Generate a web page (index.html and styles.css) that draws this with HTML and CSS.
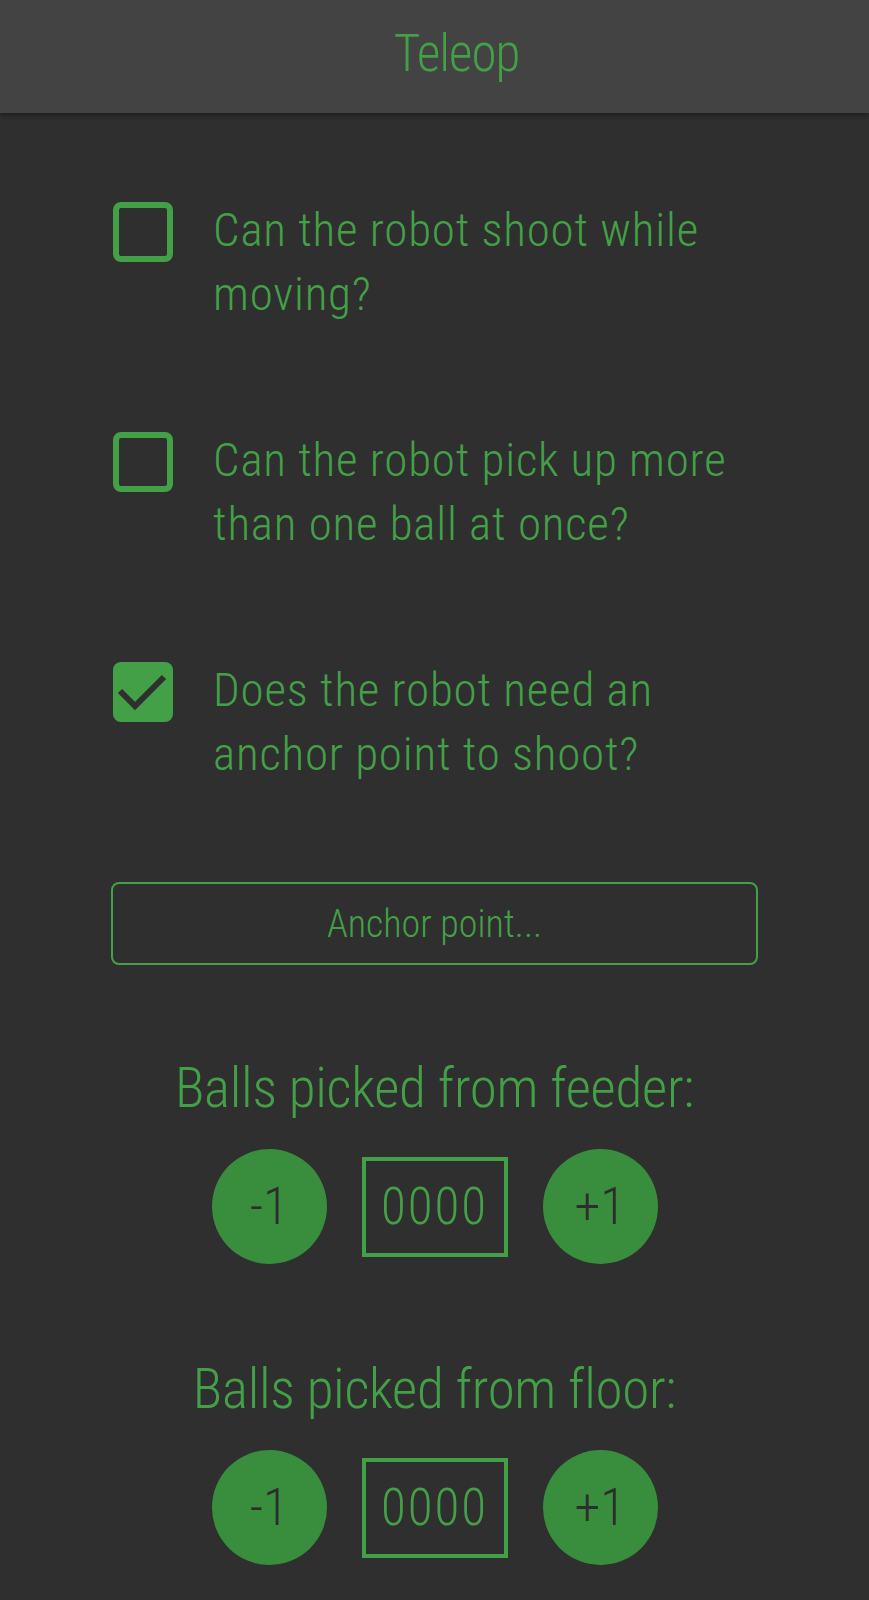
FILE: index.html
```html
<!DOCTYPE html>
<html lang="en">
<head>
<meta charset="utf-8">
<title>Teleop</title>
<link rel="stylesheet" href="styles.css">
</head>
<body>
<header class="app-bar">
  <h1 class="app-title">Teleop</h1>
</header>
<main class="content">
  <label class="question">
    <span class="checkbox"></span>
    <span class="question-text">Can the robot shoot while moving?</span>
  </label>
  <label class="question">
    <span class="checkbox"></span>
    <span class="question-text">Can the robot pick up more than one ball at once?</span>
  </label>
  <label class="question">
    <span class="checkbox checked">
      <svg class="check-icon" viewBox="0 0 60 60" width="60" height="60" aria-hidden="true"><path d="M7 29 L22 44 L51 15" fill="none" stroke="#2f2f2f" stroke-width="6"/></svg>
    </span>
    <span class="question-text">Does the robot need an anchor point to shoot?</span>
  </label>
  <button class="anchor-btn">Anchor point...</button>
  <section class="counter">
    <h2 class="counter-title">Balls picked from feeder:</h2>
    <div class="counter-row">
      <button class="round-btn">-1</button>
      <div class="count-box">0000</div>
      <button class="round-btn">+1</button>
    </div>
  </section>
  <section class="counter counter-second">
    <h2 class="counter-title">Balls picked from floor:</h2>
    <div class="counter-row">
      <button class="round-btn">-1</button>
      <div class="count-box">0000</div>
      <button class="round-btn">+1</button>
    </div>
  </section>
</main>
</body>
</html>
```
FILE: styles.css
```css
html, body {
  margin: 0;
  padding: 0;
  background: #2f2f2f;
}
body {
  font-family: "Roboto Condensed", Roboto, "DejaVu Sans Condensed", sans-serif;
  font-stretch: 75%;
  font-weight: 300;
  color: #43a047;
  height: 1600px;
  overflow: hidden;
}
.app-bar {
  height: 113px;
  box-sizing: border-box;
  padding-bottom: 7px;
  padding-left: 44px;
  background: #434343;
  box-shadow: 0 2px 6px rgba(0, 0, 0, 0.45);
  display: flex;
  align-items: center;
  justify-content: center;
  position: relative;
}
.app-title {
  margin: 0;
  font-weight: 300;
  font-size: 51px;
  letter-spacing: -1px;
  line-height: 1;
  color: #43a047;
}
.content {
  width: 647px;
  margin: 0 auto;
  padding-top: 85px;
  display: flex;
  flex-direction: column;
}
.question {
  display: flex;
  align-items: flex-start;
  gap: 40px;
  margin-bottom: 102px;
}
.question:nth-of-type(3) {
  margin-bottom: 96px;
}
.checkbox {
  flex: none;
  width: 60px;
  height: 60px;
  margin: 4px 0 0 2px;
  box-sizing: border-box;
  border: 6px solid #43a047;
  border-radius: 8px;
  display: flex;
}
.checkbox.checked {
  background: #43a047;
  border: none;
}
.question-text {
  font-size: 47px;
  letter-spacing: 0.8px;
  line-height: 64px;
}
.anchor-btn {
  height: 83px;
  border: 2px solid #43a047;
  border-radius: 8px;
  background: transparent;
  color: #43a047;
  font-family: inherit;
  font-stretch: inherit;
  font-weight: 300;
  font-size: 38px;
  padding: 0;
}
.counter {
  display: flex;
  flex-direction: column;
  align-items: center;
  margin-top: 90px;
}
.counter-second {
  margin-top: 92px;
}
.counter-title {
  margin: 0;
  font-weight: 300;
  font-size: 55px;
  letter-spacing: -0.3px;
  line-height: 66px;
}
.counter-row {
  display: flex;
  align-items: center;
  gap: 35px;
  margin-top: 28px;
}
.round-btn {
  width: 115px;
  height: 115px;
  border-radius: 50%;
  border: none;
  background: #388e3c;
  color: #2d2d2d;
  font-family: inherit;
  font-stretch: inherit;
  font-weight: 300;
  font-size: 52px;
  padding: 0;
}
.count-box {
  width: 146px;
  height: 100px;
  box-sizing: border-box;
  border: 4px solid #43a047;
  display: flex;
  align-items: center;
  justify-content: center;
  font-size: 51px;
  letter-spacing: 2px;
}
```
